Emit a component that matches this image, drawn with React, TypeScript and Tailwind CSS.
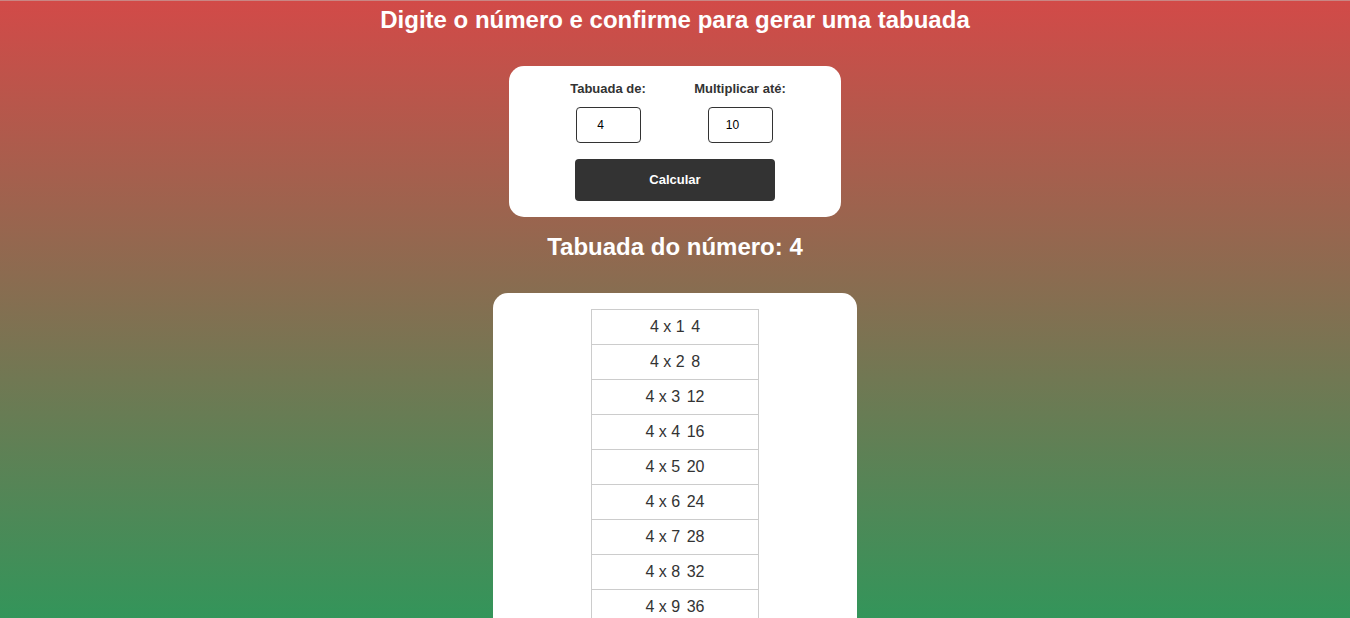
import { useState } from "react";

export default function App() {
  const [numero, setNumero] = useState("4");
  const [limite, setLimite] = useState("10");
  const [tabuada, setTabuada] = useState({ n: 4, ate: 10 });

  const linhas = Array.from({ length: tabuada.ate }, (_, i) => i + 1);

  return (
    <div className="min-h-screen bg-[linear-gradient(180deg,#d24a48_0px,#33955a_618px)] font-['Liberation_Sans',Arial,sans-serif] pb-6 border-t border-[#c98684]">
      <h1 className="text-white font-bold text-[24px] leading-[28px] text-center pt-[5px]">
        Digite o número e confirme para gerar uma tabuada
      </h1>

      <div className="mx-auto mt-[32px] w-[332px] bg-white rounded-[15px] pt-[16px] pb-[16px] flex flex-col items-center">
        <div className="flex gap-[32px] pr-[2px]">
          <div className="w-[100px] flex flex-col items-center">
            <label className="text-[13px] leading-[14px] font-bold text-[#333]">Tabuada de:</label>
            <input
              value={numero}
              onChange={(e) => setNumero(e.target.value)}
              className="mt-[11px] w-[65px] h-[36px] border border-[#333] rounded-[4px] text-[12px] text-center pr-[15px] text-black outline-none"
            />
          </div>
          <div className="w-[100px] flex flex-col items-center">
            <label className="text-[13px] leading-[14px] font-bold text-[#333]">Multiplicar até:</label>
            <input
              value={limite}
              onChange={(e) => setLimite(e.target.value)}
              className="mt-[11px] w-[65px] h-[36px] border border-[#333] rounded-[4px] text-[12px] text-center pr-[15px] text-black outline-none"
            />
          </div>
        </div>
        <button
          onClick={() => setTabuada({ n: Number(numero) || 0, ate: Number(limite) || 0 })}
          className="mt-[16px] w-[200px] h-[42px] bg-[#333] rounded-[4px] text-white font-bold text-[13px]"
        >
          Calcular
        </button>
      </div>

      <h2 className="text-white font-bold text-[24px] leading-[26px] text-center mt-[17px]">
        Tabuada do número: {tabuada.n}
      </h2>

      <div className="mx-auto mt-[33px] w-[364px] bg-white rounded-[15px] p-[16px] flex justify-center">
        <table className="w-[168px] border-collapse">
          <tbody>
            {linhas.map((i) => (
              <tr key={i}>
                <td className="border border-[#ccc] h-[35px] text-center text-[16px] text-[#333]">
                  {tabuada.n} x {i} <span className="pl-[2px]">{tabuada.n * i}</span>
                </td>
              </tr>
            ))}
          </tbody>
        </table>
      </div>
    </div>
  );
}
